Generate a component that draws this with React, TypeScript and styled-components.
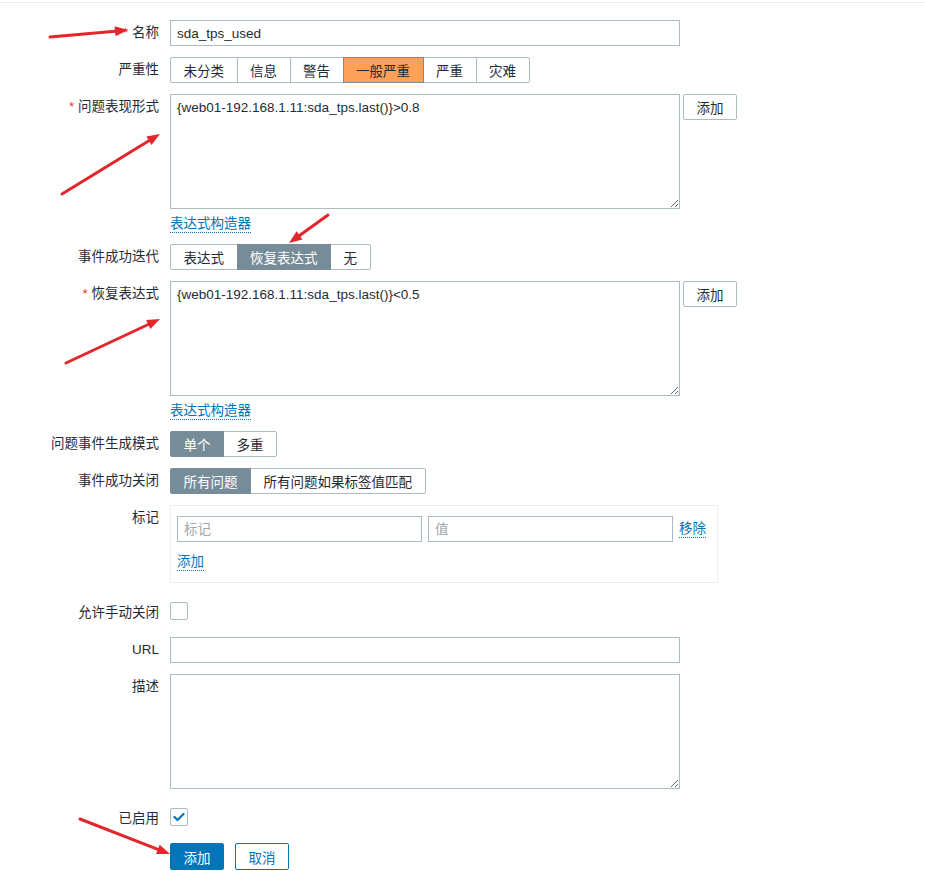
import { FC, ReactNode } from 'react';
import styled, { createGlobalStyle, css } from 'styled-components';

const GlobalStyle = createGlobalStyle`
  html, body {
    margin: 0;
    padding: 0;
    background: #ffffff;
  }
  body {
    font-family: 'Liberation Sans', 'Noto Sans CJK SC', Arial, sans-serif;
    font-size: 13.5px;
    color: #1f2c33;
  }
  * {
    box-sizing: border-box;
  }
`;

const font = css`
  font-family: 'Liberation Sans', 'Noto Sans CJK SC', Arial, sans-serif;
  font-size: 13.5px;
`;

const Page = styled.div`
  position: relative;
  min-height: 869px;
  margin-top: 2px;
  border-top: 1px solid #ebeef0;
  padding-top: 17px;
`;

const Row = styled.div<{ $top?: number }>`
  display: flex;
  align-items: flex-start;
  margin-bottom: 11px;
  padding-top: ${(p) => p.$top ?? 0}px;
`;

const Label = styled.label`
  width: 159px;
  margin-right: 11px;
  flex-shrink: 0;
  text-align: right;
  line-height: 26px;
  white-space: nowrap;
`;

const Star = styled.span`
  color: #e33734;
`;

const Field = styled.div`
  display: flex;
  flex-direction: column;
  align-items: flex-start;
`;

const Inline = styled.div`
  display: flex;
  align-items: flex-start;
`;

const TextInput = styled.input<{ $width?: number }>`
  ${font};
  width: ${(p) => p.$width ?? 510}px;
  height: 26px;
  border: 1px solid #acbbc2;
  border-radius: 0;
  padding: 0 6px;
  color: #1f2c33;
  background: #fff;
  outline: none;

  &::placeholder {
    color: #a3a9ad;
  }
`;

const TextArea = styled.textarea`
  ${font};
  display: block;
  width: 510px;
  height: 115px;
  border: 1px solid #acbbc2;
  padding: 4px 6px;
  line-height: 17px;
  color: #1f2c33;
  resize: both;
  outline: none;
  margin: 0;
`;

const Segmented = styled.div`
  display: inline-flex;
  height: 26px;
`;

const SegButton = styled.span<{ $state?: 'gray' | 'orange' }>`
  display: flex;
  align-items: center;
  height: 26px;
  padding: 0 12.5px;
  border: 1px solid #acbbc2;
  margin-left: -1px;
  background: #fff;
  color: #1f2c33;
  white-space: nowrap;
  position: relative;

  &:first-child {
    margin-left: 0;
    border-radius: 2px 0 0 2px;
  }
  &:last-child {
    border-radius: 0 2px 2px 0;
  }

  ${(p) =>
    p.$state === 'gray' &&
    css`
      background: #768d99;
      border-color: #768d99;
      color: #fff;
      z-index: 1;
    `}
  ${(p) =>
    p.$state === 'orange' &&
    css`
      background: #ffa059;
      border-color: #768d99;
      z-index: 1;
    `}
`;

const Link = styled.a<{ $top?: number }>`
  display: inline-block;
  margin-top: ${(p) => p.$top ?? 0}px;
  color: #0275b8;
  line-height: 16px;
  border-bottom: 1px dotted #0275b8;
  text-decoration: none;
  cursor: pointer;
`;

const SideButton = styled.button`
  ${font};
  width: 54px;
  height: 26px;
  margin-left: 3px;
  border: 1px solid #acbbc2;
  border-radius: 2px;
  background: #fff;
  color: #1f2c33;
  padding: 0;
`;

const TagBox = styled.div`
  width: 548px;
  border: 1px solid #ebeef0;
  padding: 10px 11px 11px 6px;
`;

const TagLine = styled.div`
  display: flex;
  align-items: center;
  gap: 6px;
`;

const Box = styled.span`
  display: flex;
  align-items: center;
  justify-content: center;
  width: 18px;
  height: 18px;
  margin-top: 2px;
  border: 1px solid #acbbc2;
  border-radius: 2px;
  background: #fff;
`;

const Actions = styled.div`
  display: flex;
  gap: 11px;
  margin-left: 170px;
`;

const Button = styled.button<{ $primary?: boolean }>`
  ${font};
  width: 54px;
  height: 27px;
  padding: 0;
  border-radius: 2px;
  border: 1px solid #0275b8;
  background: ${(p) => (p.$primary ? '#0275b8' : '#fff')};
  color: ${(p) => (p.$primary ? '#fff' : '#0275b8')};
`;

const Overlay = styled.svg`
  position: absolute;
  left: 0;
  top: -3px;
  width: 925px;
  height: 871px;
  pointer-events: none;
`;

const Arrow: FC<{ x1: number; y1: number; x2: number; y2: number }> = ({ x1, y1, x2, y2 }) => {
  const dx = x2 - x1;
  const dy = y2 - y1;
  const len = Math.hypot(dx, dy);
  const ux = dx / len;
  const uy = dy / len;
  const bx = x2 - ux * 13;
  const by = y2 - uy * 13;
  const px = -uy * 5;
  const py = ux * 5;
  return (
    <g>
      <line x1={x1} y1={y1} x2={bx} y2={by} stroke='#e3262b' strokeWidth='3' strokeLinecap='round' />
      <polygon
        points={`${x2},${y2} ${bx + px},${by + py} ${bx - px},${by - py}`}
        fill='#e3262b'
      />
    </g>
  );
};

const FormRow: FC<{ label: string; required?: boolean; top?: number; children: ReactNode }> = ({
  label,
  required,
  top,
  children,
}) => (
  <Row $top={top}>
    <Label>
      {required && <Star>* </Star>}
      {label}
    </Label>
    <Field>{children}</Field>
  </Row>
);

const severities = ['未分类', '信息', '警告', '一般严重', '严重', '灾难'];

const App: FC = () => {
  return (
    <>
      <GlobalStyle />
      <Page>
        <FormRow label='名称' required>
          <TextInput defaultValue='sda_tps_used' />
        </FormRow>

        <FormRow label='严重性'>
          <Segmented>
            {severities.map((s) => (
              <SegButton key={s} $state={s === '一般严重' ? 'orange' : undefined}>
                {s}
              </SegButton>
            ))}
          </Segmented>
        </FormRow>

        <FormRow label='问题表现形式' required>
          <Inline>
            <TextArea defaultValue='{web01-192.168.1.11:sda_tps.last()}>0.8' />
            <SideButton>添加</SideButton>
          </Inline>
          <Link $top={7}>表达式构造器</Link>
        </FormRow>

        <FormRow label='事件成功迭代'>
          <Segmented>
            <SegButton>表达式</SegButton>
            <SegButton $state='gray'>恢复表达式</SegButton>
            <SegButton>无</SegButton>
          </Segmented>
        </FormRow>

        <FormRow label='恢复表达式' required>
          <Inline>
            <TextArea defaultValue='{web01-192.168.1.11:sda_tps.last()}<0.5' />
            <SideButton>添加</SideButton>
          </Inline>
          <Link $top={7}>表达式构造器</Link>
        </FormRow>

        <FormRow label='问题事件生成模式'>
          <Segmented>
            <SegButton $state='gray'>单个</SegButton>
            <SegButton>多重</SegButton>
          </Segmented>
        </FormRow>

        <FormRow label='事件成功关闭'>
          <Segmented>
            <SegButton $state='gray'>所有问题</SegButton>
            <SegButton>所有问题如果标签值匹配</SegButton>
          </Segmented>
        </FormRow>

        <FormRow label='标记'>
          <TagBox>
            <TagLine>
              <TextInput $width={245} placeholder='标记' />
              <TextInput $width={245} placeholder='值' />
              <Link>移除</Link>
            </TagLine>
            <Link $top={12}>添加</Link>
          </TagBox>
        </FormRow>

        <FormRow label='允许手动关闭' top={6}>
          <Box />
        </FormRow>

        <FormRow label='URL'>
          <TextInput />
        </FormRow>

        <FormRow label='描述'>
          <TextArea />
        </FormRow>

        <FormRow label='已启用' top={6}>
          <Box>
            <svg width='12' height='10' viewBox='0 0 12 10'>
              <polyline
                points='1.5,5 4.5,8 10.5,2'
                fill='none'
                stroke='#0275b8'
                strokeWidth='2.2'
                strokeLinecap='round'
                strokeLinejoin='round'
              />
            </svg>
          </Box>
        </FormRow>

        <Actions>
          <Button $primary>添加</Button>
          <Button>取消</Button>
        </Actions>

        <Overlay viewBox='0 0 925 871'>
          <Arrow x1={50} y1={37} x2={128} y2={30} />
          <Arrow x1={62} y1={194} x2={160} y2={134} />
          <Arrow x1={328} y1={215} x2={289} y2={243} />
          <Arrow x1={66} y1={363} x2={160} y2={319} />
          <Arrow x1={80} y1={819} x2={170} y2={854} />
        </Overlay>
      </Page>
    </>
  );
};

export default App;
